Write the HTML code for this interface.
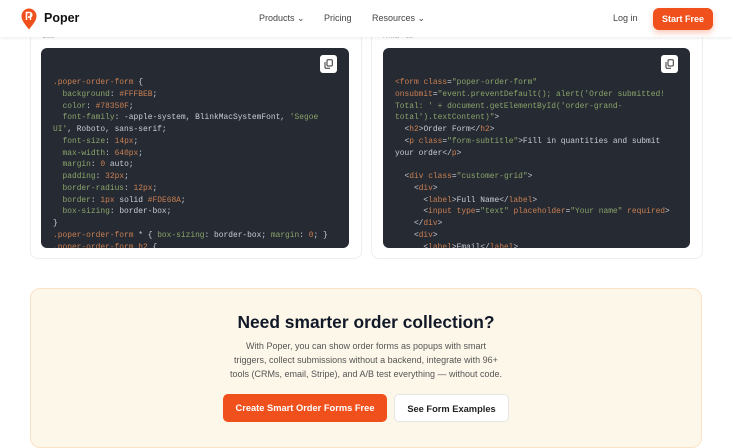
<!DOCTYPE html>
<html><head><meta charset="utf-8"><style>
*{box-sizing:border-box;margin:0;padding:0}
body{width:732px;height:425px;overflow:hidden;background:#fff;font-family:"Liberation Sans",sans-serif;position:relative}
.hdr{position:absolute;left:0;top:0;width:732px;height:37px;background:#fff;box-shadow:0 1px 4px rgba(0,0,0,.08);z-index:5}
.logo{position:absolute;left:21px;top:8px}
.brand{position:absolute;left:44px;top:11px;font-weight:bold;font-size:12.5px;color:#111}
.nav{position:absolute;top:13px;font-size:9px;color:#444}
.btn1{position:absolute;left:653px;top:8px;width:60px;height:22px;background:#f0501c;border-radius:6px;color:#fff;font-size:9px;font-weight:bold;text-align:center;line-height:22px;box-shadow:0 3px 6px rgba(240,80,28,.3)}
.card{position:absolute;top:20px;height:239px;width:332px;border:1px solid #eee;border-radius:8px;background:#fff}
.lbl{position:absolute;top:34px;font-size:6px;color:#aaa}
.code{position:absolute;top:48px;height:200px;background:#262a33;border-radius:6px;overflow:hidden}
.code pre{position:absolute;left:12px;top:29px;font-family:"Liberation Mono",monospace;font-size:7.9px;line-height:11.75px;color:#c9ccd2}
.cp{position:absolute;top:7px;right:12px;width:17px;height:18px;background:#fff;border-radius:3px}
.cp svg{position:absolute;left:4px;top:4px}
.o{color:#c97f52}.g{color:#8aa46a}
.cta{position:absolute;left:30px;top:288px;width:672px;height:160px;background:#fdf7ea;border:1px solid #fae3c5;border-radius:10px}
h2{position:absolute;left:0;width:732px;top:312px;text-align:center;font-size:17.4px;color:#111827}
.p{position:absolute;left:0;width:732px;top:339px;text-align:center;font-size:9px;line-height:14px;color:#555}
.b{position:absolute;top:394px;height:28px;border-radius:5px;font-size:9.3px;font-weight:bold;text-align:center;line-height:28px}
</style></head><body>
<div class="card" style="left:30px"></div>
<div class="card" style="left:371px"></div>
<div class="lbl" style="left:42px">CSS</div>
<div class="lbl" style="left:383px">HTML + JS</div>
<div class="code" style="left:41px;width:308px"><div class="cp"><svg width="9" height="10" viewBox="0 0 9 10"><rect x="3" y="0.7" width="5.3" height="6.3" rx="1" fill="none" stroke="#333" stroke-width="1"/><path d="M1 3v5.3a1 1 0 0 0 1 1h4" fill="none" stroke="#333" stroke-width="1"/></svg></div><pre><span class="o">.poper-order-form</span> {
  <span class="g">background</span>: <span class="o">#FFFBEB</span>;
  <span class="g">color</span>: <span class="o">#78350F</span>;
  <span class="g">font-family</span>: -apple-system, BlinkMacSystemFont, <span class="g">'Segoe</span>
<span class="g">UI'</span>, Roboto, sans-serif;
  <span class="g">font-size</span>: <span class="o">14px</span>;
  <span class="g">max-width</span>: <span class="o">640px</span>;
  <span class="g">margin</span>: <span class="o">0</span> auto;
  <span class="g">padding</span>: <span class="o">32px</span>;
  <span class="g">border-radius</span>: <span class="o">12px</span>;
  <span class="g">border</span>: <span class="o">1px</span> solid <span class="o">#FDE68A</span>;
  <span class="g">box-sizing</span>: border-box;
}
<span class="o">.poper-order-form</span> * { <span class="g">box-sizing</span>: border-box; <span class="g">margin</span>: <span class="o">0</span>; }
<span class="o">.poper-order-form h2</span> {</pre></div>
<div class="code" style="left:383px;width:307px"><div class="cp"><svg width="9" height="10" viewBox="0 0 9 10"><rect x="3" y="0.7" width="5.3" height="6.3" rx="1" fill="none" stroke="#333" stroke-width="1"/><path d="M1 3v5.3a1 1 0 0 0 1 1h4" fill="none" stroke="#333" stroke-width="1"/></svg></div><pre><span class="o">&lt;form</span> <span class="o">class</span>=<span class="g">"poper-order-form"</span>
<span class="o">onsubmit</span>=<span class="g">"event.preventDefault(); alert('Order submitted!</span>
<span class="g">Total: ' + document.getElementById('order-grand-</span>
<span class="g">total').textContent)"</span>&gt;
  &lt;<span class="o">h2</span>&gt;Order Form&lt;/<span class="o">h2</span>&gt;
  &lt;<span class="o">p</span> <span class="o">class</span>=<span class="g">"form-subtitle"</span>&gt;Fill in quantities and submit
your order&lt;/<span class="o">p</span>&gt;

  &lt;<span class="o">div</span> <span class="o">class</span>=<span class="g">"customer-grid"</span>&gt;
    &lt;<span class="o">div</span>&gt;
      &lt;<span class="o">label</span>&gt;Full Name&lt;/<span class="o">label</span>&gt;
      &lt;<span class="o">input</span> <span class="o">type</span>=<span class="g">"text"</span> <span class="o">placeholder</span>=<span class="g">"Your name"</span> <span class="o">required</span>&gt;
    &lt;/<span class="o">div</span>&gt;
    &lt;<span class="o">div</span>&gt;
      &lt;<span class="o">label</span>&gt;Email&lt;/<span class="o">label</span>&gt;</pre></div>
<div class="hdr"><svg class="logo" width="16" height="22" viewBox="0 0 16 22"><path d="M8 0.5C3.9 0.5 0.5 3.9 0.5 8c0 4.6 3.3 8 7.5 13.5C12.2 16 15.5 12.6 15.5 8 15.5 3.9 12.1 0.5 8 0.5z" fill="#f0501c"/><path d="M5.5 12V4.5h3a2.3 2.3 0 0 1 0 4.6H7" fill="none" stroke="#fff" stroke-width="1.6"/><path d="M9.5 6v6" stroke="#fff" stroke-width="1.4"/></svg>
<div class="brand">Poper</div>
<div class="nav" style="left:259px">Products ⌄</div>
<div class="nav" style="left:324px">Pricing</div>
<div class="nav" style="left:372px">Resources ⌄</div>
<div class="nav" style="left:613px">Log in</div>
<div class="btn1">Start Free</div></div>
<div class="cta"></div>
<h2>Need smarter order collection?</h2>
<div class="p">With Poper, you can show order forms as popups with smart<br>triggers, collect submissions without a backend, integrate with 96+<br>tools (CRMs, email, Stripe), and A/B test everything — without code.</div>
<div class="b" style="left:223px;width:164px;background:#f0501c;color:#fff">Create Smart Order Forms Free</div>
<div class="b" style="left:394px;width:115px;background:#fff;border:1px solid #e5e5e5;color:#222">See Form Examples</div>
</body></html>
